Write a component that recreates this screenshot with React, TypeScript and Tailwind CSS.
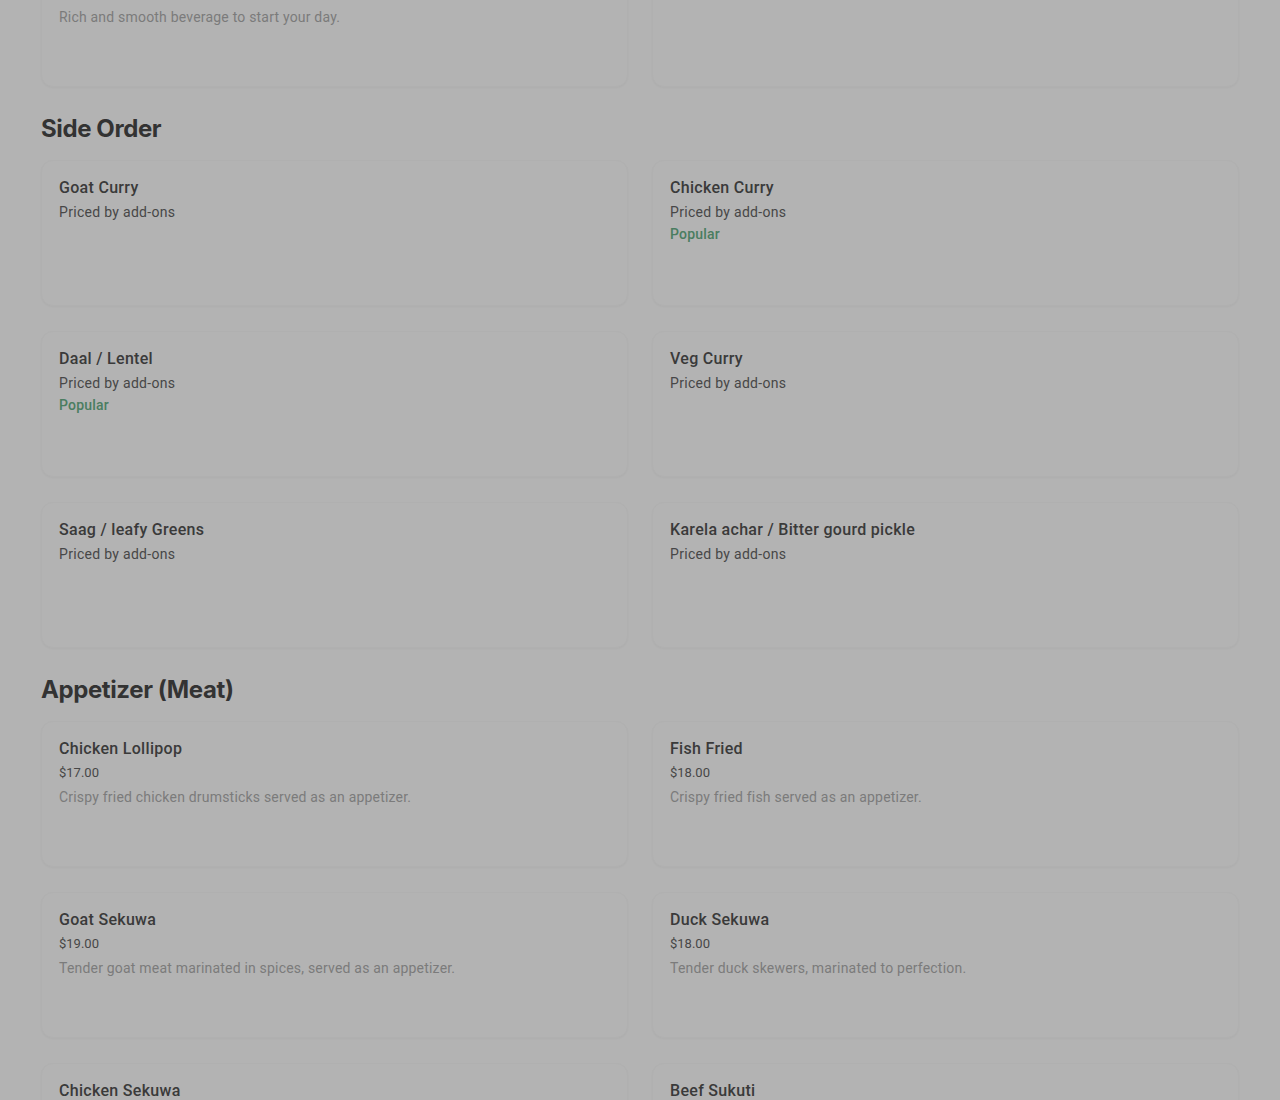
import React from "react";

type Item = { name: string; price: string; desc?: string; popular?: boolean };

const Card = ({ item }: { item: Item }) => {
  const isMoney = item.price.startsWith("$");
  return (
    <div className="h-[146px] rounded-xl bg-[#b3b3b3] border border-[#b0b0b0] shadow-[0_1px_2px_rgba(0,0,0,0.03)] px-[17px] pt-[15px]">
      <div className="text-[16px] leading-[24px] font-medium tracking-[0.3px] text-[#3a3a3a]">{item.name}</div>
      {isMoney ? (
        <div className="mt-[1px] text-[13px] leading-[22px] text-[#474747]">{item.price}</div>
      ) : (
        <div className="mt-[1px] text-[14px] leading-[22px] tracking-[0.3px] text-[#474747]">{item.price}</div>
      )}
      {item.popular && (
        <div className="text-[14px] leading-[22px] font-medium tracking-[0.2px] text-[#4a7d60]">Popular</div>
      )}
      {item.desc && (
        <div className="mt-[2px] text-[14px] leading-[22px] tracking-[0.2px] text-[#7b7b7b]">{item.desc}</div>
      )}
    </div>
  );
};

const Grid = ({ items }: { items: Item[] }) => (
  <div className="grid grid-cols-2 gap-x-[24px] gap-y-[25px]">
    {items.map((it, i) => (
      <Card key={i} item={it} />
    ))}
  </div>
);

const Heading = ({ children }: { children: React.ReactNode }) => (
  <h2 className="mt-[26px] mb-[15px] text-[24px] leading-[32px] font-bold tracking-[-0.4px] text-[#333333] font-['Inter',sans-serif]">
    {children}
  </h2>
);

export default function App() {
  const beverages: Item[] = [
    { name: "Masala Chai", price: "$3.00", desc: "Rich and smooth beverage to start your day." },
    { name: "Lassi", price: "$4.00" },
  ];
  const sides: Item[] = [
    { name: "Goat Curry", price: "Priced by add-ons" },
    { name: "Chicken Curry", price: "Priced by add-ons", popular: true },
    { name: "Daal / Lentel", price: "Priced by add-ons", popular: true },
    { name: "Veg Curry", price: "Priced by add-ons" },
    { name: "Saag / leafy Greens", price: "Priced by add-ons" },
    { name: "Karela achar / Bitter gourd pickle", price: "Priced by add-ons" },
  ];
  const apps: Item[] = [
    { name: "Chicken Lollipop", price: "$17.00", desc: "Crispy fried chicken drumsticks served as an appetizer." },
    { name: "Fish Fried", price: "$18.00", desc: "Crispy fried fish served as an appetizer." },
    { name: "Goat Sekuwa", price: "$19.00", desc: "Tender goat meat marinated in spices, served as an appetizer." },
    { name: "Duck Sekuwa", price: "$18.00", desc: "Tender duck skewers, marinated to perfection." },
    { name: "Chicken Sekuwa", price: "$18.00", desc: "Grilled chicken skewers with spices." },
    { name: "Beef Sukuti", price: "$19.00", desc: "Dried spiced beef, a Nepali delicacy." },
  ];
  return (
    <div className="w-[1280px] h-[1100px] overflow-hidden bg-[#b3b3b3] font-['Roboto',sans-serif]">
      <div className="px-[41px] -mt-[59px]">
        <Grid items={beverages} />
        <Heading>Side Order</Heading>
        <Grid items={sides} />
        <Heading>Appetizer (Meat)</Heading>
        <Grid items={apps} />
      </div>
    </div>
  );
}
